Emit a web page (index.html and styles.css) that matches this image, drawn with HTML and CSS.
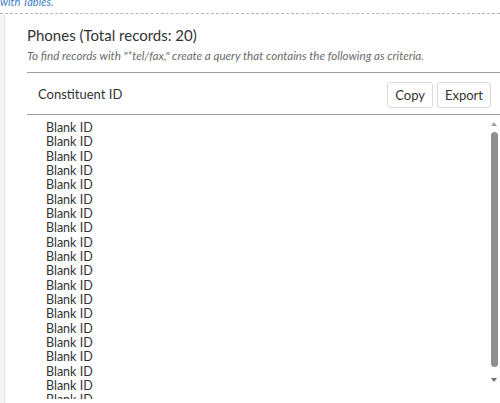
FILE: index.html
```html
<!DOCTYPE html>
<html>
<head>
<meta charset="utf-8">
<link rel="stylesheet" href="styles.css">
</head>
<body>
<div class="top-note">with Tables.</div>
<div class="main">
  <div class="side"></div>
  <div class="panel">
    <h2 class="title">Phones (Total records: 20)</h2>
    <p class="hint">To find records with "*tel/fax," create a query that contains the following as criteria.</p>
    <div class="table-head">
      <span class="col-label">Constituent ID</span>
      <div class="actions">
        <button class="btn">Copy</button>
        <button class="btn">Export</button>
      </div>
    </div>
    <div class="list-wrap">
      <ul class="list">
        <li>Blank ID</li><li>Blank ID</li><li>Blank ID</li><li>Blank ID</li><li>Blank ID</li>
        <li>Blank ID</li><li>Blank ID</li><li>Blank ID</li><li>Blank ID</li><li>Blank ID</li>
        <li>Blank ID</li><li>Blank ID</li><li>Blank ID</li><li>Blank ID</li><li>Blank ID</li>
        <li>Blank ID</li><li>Blank ID</li><li>Blank ID</li><li>Blank ID</li><li>Blank ID</li>
      </ul>
      <div class="scrollbar">
        <span class="arrow up"></span>
        <span class="thumb"></span>
        <span class="arrow down"></span>
      </div>
    </div>
  </div>
</div>
</body>
</html>
```
FILE: styles.css
```css
html, body {
  margin: 0;
  padding: 0;
  background: #fff;
  overflow: hidden;
  height: 403px;
}
body {
  font-family: Lato, "Open Sans", sans-serif;
  color: #333;
}
.top-note {
  font-size: 11px;
  font-style: italic;
  color: #3d7fc1;
  height: 13px;
  line-height: 4px;
  overflow: hidden;
}
.main {
  display: flex;
  border-top: 1px dashed #b5b5b5;
  height: 390px;
}
.side {
  width: 4px;
  background: #f3f3f3;
  border-right: 1px solid #e4e4e4;
  flex: none;
}
.panel {
  flex: 1;
  padding-left: 22px;
  min-width: 0;
}
.title {
  margin: 11px 0 0;
  font-size: 15px;
  font-weight: 400;
  line-height: 20px;
  color: #333;
}
.hint {
  margin: 3px 0 0;
  font-size: 11.6px;
  font-style: italic;
  color: #6b6b6b;
  line-height: 15px;
  white-space: nowrap;
}
.table-head {
  margin-top: 9px;
  border-top: 1px solid #a0a0a0;
  border-bottom: 1px solid #a0a0a0;
  display: flex;
  align-items: center;
  justify-content: space-between;
  height: 41px;
  padding-left: 11px;
  padding-right: 9px;
}
.col-label {
  font-size: 13px;
}
.actions {
  display: flex;
  gap: 4px;
  padding-top: 2px;
}
.btn {
  font-family: Lato, "Open Sans", sans-serif;
  font-size: 13px;
  color: #333;
  background: #fff;
  border: 1px solid #d9d9d9;
  border-radius: 3px;
  height: 26px;
  padding: 0 7px;
}
.list-wrap {
  display: flex;
  height: 284px;
  overflow: hidden;
}
.list {
  flex: 1;
  list-style: none;
  margin: 0;
  padding: 6px 0 0 19px;
  font-size: 12.5px;
  line-height: 14.33px;
}
.scrollbar {
  width: 10px;
  display: flex;
  flex-direction: column;
  align-items: center;
  padding-top: 7px;
  margin-right: 1px;
}
.arrow {
  width: 0;
  height: 0;
  border-left: 3px solid transparent;
  border-right: 3px solid transparent;
}
.arrow.up {
  border-bottom: 4px solid #a3a3a3;
}
.arrow.down {
  border-top: 4px solid #6e6e6e;
}
.thumb {
  width: 7px;
  height: 235px;
  background: #8f8f8f;
  border-radius: 4px;
  margin: 6px 0 11px;
}
```
